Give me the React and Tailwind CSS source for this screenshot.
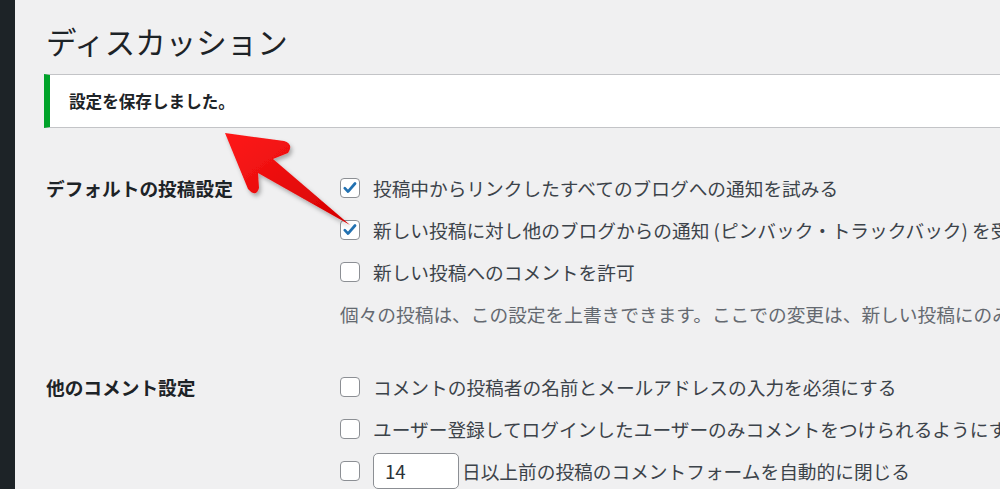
import React from "react";

const font = { fontFamily: '"Noto Sans CJK JP", "Noto Sans", sans-serif' };

/// checkbox
function Checkbox({ checked }) {
  return (
    <span className="w-[20px] h-[20px] shrink-0 rounded-[4px] border border-[#8c8f94] bg-white flex items-center justify-center mr-[13px]">
      {checked && (
        <svg width="18" height="18" viewBox="0 0 20 20">
          <path
            d="M4.2 10.2l3.6 3.8 7.8-9"
            fill="none"
            stroke="#2271b1"
            strokeWidth="3"
            strokeLinecap="round"
            strokeLinejoin="round"
          />
        </svg>
      )}
    </span>
  );
}

function Row({ checked, children }) {
  return (
    <div className="h-[42px] flex items-center whitespace-nowrap">
      <Checkbox checked={checked} />
      {children}
    </div>
  );
}

function Arrow() {
  return (
    <svg
      className="absolute left-0 top-0 pointer-events-none"
      width="400"
      height="260"
      viewBox="0 0 400 260"
    >
      <defs>
        <linearGradient id="red" x1="0" y1="0" x2="1" y2="1">
          <stop offset="0" stopColor="#ff1a1a" />
          <stop offset="1" stopColor="#d40000" />
        </linearGradient>
        <filter id="shadow" x="-20%" y="-20%" width="140%" height="140%">
          <feDropShadow dx="2" dy="3" stdDeviation="2" floodColor="#000" floodOpacity="0.3" />
        </filter>
      </defs>
      <path
        d="M225,133 L284,141 Q294,144 288,153 L273,159 L350,225 L258,173 L259,188 Q256,198 248,189 Z"
        fill="url(#red)"
        filter="url(#shadow)"
      />
    </svg>
  );
}

export default function App() {
  return (
    <div
      className="relative w-[1000px] h-[489px] overflow-hidden flex bg-[#f0f0f1] text-[#3c434a]"
      style={font}
    >
      {/* sidebar edge */}
      <div className="w-[15px] shrink-0 bg-[#1d2327]" />

      <div className="flex-1 min-w-0">
        <h1 className="pl-[31px] pt-[22px] text-[30.5px] leading-[39px] font-normal text-[#1d2327] whitespace-nowrap">
          ディスカッション
        </h1>

        {/* notice */}
        <div className="mt-[13px] ml-[29px] w-[1100px] h-[54px] bg-white border border-[#c3c4c7] border-l-[6px] border-l-[#00a32a] flex items-center pl-[19px]">
          <p className="text-[16.6px] font-bold text-[#1d2327] whitespace-nowrap">
            設定を保存しました。
          </p>
        </div>

        {/* form */}
        <div className="pl-[31px] mt-[39px] text-[18.7px]">
          <div className="grid grid-cols-[294px_1fr]">
            <div className="h-[42px] flex items-center font-bold text-[#1d2327] whitespace-nowrap">
              デフォルトの投稿設定
            </div>
            <div>
              <Row checked>投稿中からリンクしたすべてのブログへの通知を試みる</Row>
              <Row checked>
                新しい投稿に対し他のブログからの通知 (ピンバック・トラックバック) を受け付ける
              </Row>
              <Row>新しい投稿へのコメントを許可</Row>
              <div className="h-[42px] flex items-center whitespace-nowrap text-[#646970]">
                個々の投稿は、この設定を上書きできます。ここでの変更は、新しい投稿にのみ適用されます。
              </div>
            </div>
          </div>

          <div className="grid grid-cols-[294px_1fr] mt-[31px]">
            <div className="h-[42px] flex items-center font-bold text-[#1d2327] whitespace-nowrap">
              他のコメント設定
            </div>
            <div>
              <Row>コメントの投稿者の名前とメールアドレスの入力を必須にする</Row>
              <Row>ユーザー登録してログインしたユーザーのみコメントをつけられるようにする</Row>
              <Row>
                <span className="w-[86px] h-[36px] rounded-[5px] border border-[#8c8f94] bg-white flex items-center pl-[11px] mr-[3px] text-[#2c3338]">
                  14
                </span>
                日以上前の投稿のコメントフォームを自動的に閉じる
              </Row>
            </div>
          </div>
        </div>
      </div>

      <Arrow />
    </div>
  );
}
